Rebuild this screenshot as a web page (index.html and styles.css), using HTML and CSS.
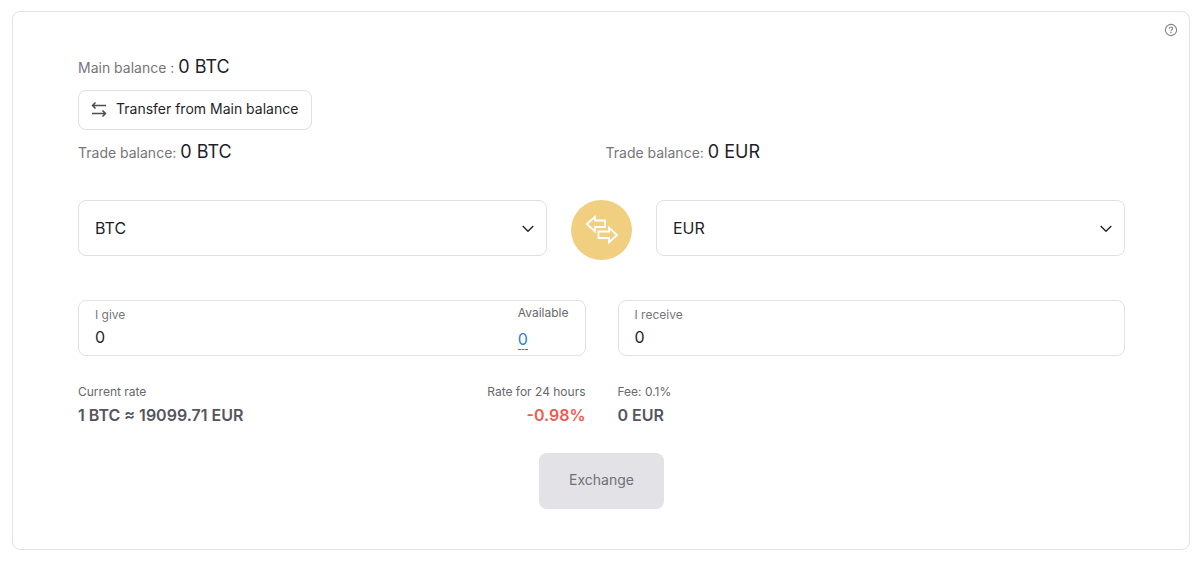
FILE: index.html
```
<!DOCTYPE html>
<html lang="en">
<head>
    <meta charset="UTF-8">
    <meta name="viewport" content="width=device-width, initial-scale=1.0">
    <title>Exchange</title>
    <link rel="stylesheet" href="styles.css">
</head>
<body>
    <main class="card">
        <button class="help" type="button" aria-label="Help">
            <svg width="14" height="14" viewBox="0 0 14 14" fill="none" stroke="currentColor">
                <circle cx="7" cy="7" r="5.6" stroke-width="1.1"/>
                <path d="M5.3 5.7C5.3 4.6 6 4 7 4s1.7.6 1.7 1.5C8.7 6.6 7 6.7 7 8.2M7 9.1v1.2" stroke-width="1.2"/>
            </svg>
        </button>

        <form class="exchange">
            <p class="balance">Main balance : <span class="amount">0 BTC</span></p>
            <button class="transfer" type="button">
                <svg width="16" height="16" viewBox="0 0 16 16" fill="none" stroke="currentColor" stroke-width="1.5">
                    <path d="M15 4.5H1.500M4.500 1.500l-3 3 3 3M1 12.500h13.500M11.500 9.500l3 3-3 3"/>
                </svg>
                Transfer from Main balance
            </button>
            <div class="trade-balances">
                <p class="balance">Trade balance: <span class="amount">0 BTC</span></p>
                <p class="balance">Trade balance: <span class="amount">0 EUR</span></p>
            </div>

            <div class="pair">
                <div class="select-box">
                    <select aria-label="Currency to give">
                        <option>BTC</option>
                        <option>EUR</option>
                    </select>
                    <svg class="chevron" width="12" height="8" viewBox="0 0 12 8" fill="none" stroke="currentColor" stroke-width="1.3">
                        <path d="M0.7 1L6 6.3 11.3 1"/>
                    </svg>
                </div>
                <button class="swap" type="button" aria-label="Swap currencies">
                    <svg width="34" height="30" viewBox="0 0 34 30" fill="none" stroke="currentColor" stroke-width="1.8">
                        <path d="M1.8 9L10 1.8v3.700h10V12H10v4.500z"/>
                        <path d="M32 20l-8-7.200v3.700H13.500V23H24v4.500z"/>
                    </svg>
                </button>
                <div class="select-box">
                    <select aria-label="Currency to receive">
                        <option>EUR</option>
                        <option>BTC</option>
                    </select>
                    <svg class="chevron" width="12" height="8" viewBox="0 0 12 8" fill="none" stroke="currentColor" stroke-width="1.3">
                        <path d="M0.7 1L6 6.3 11.3 1"/>
                    </svg>
                </div>
            </div>

            <div class="amounts">
                <div class="field">
                    <div class="field-main">
                        <label for="give">I give</label>
                        <input id="give" type="text" inputmode="decimal" value="0">
                    </div>
                    <div class="available">
                        <span>Available</span>
                        <a href="#give">0</a>
                    </div>
                </div>
                <div class="field">
                    <div class="field-main">
                        <label for="receive">I receive</label>
                        <input id="receive" type="text" inputmode="decimal" value="0">
                    </div>
                </div>
            </div>

            <div class="details">
                <div class="rates">
                    <div class="detail">
                        <span>Current rate</span>
                        <strong>1 BTC ≈ 19099.71 EUR</strong>
                    </div>
                    <div class="detail right">
                        <span>Rate for 24 hours</span>
                        <strong class="down">-0.98%</strong>
                    </div>
                </div>
                <div class="detail">
                    <span>Fee: 0.1%</span>
                    <strong>0 EUR</strong>
                </div>
            </div>

            <button class="submit" type="submit" disabled>Exchange</button>
        </form>
    </main>
</body>
</html>
```

FILE: styles.css
```
* {
    box-sizing: border-box;
}

body {
    margin: 0;
    padding: 11px 10px 12px 12px;
    background-color: #fff;
    color: #1f1f29;
    font-family: Inter, "Liberation Sans", sans-serif;
    font-size: 16px;
}

button, input, select {
    font-family: inherit;
    color: inherit;
}

button {
    padding: 0;
    cursor: pointer;
}

.card {
    position: relative;
    padding: 40px 64px 40px 65px;
    border: 1px solid #e3e3e6;
    border-radius: 8px;
}

.help {
    position: absolute;
    top: 11px;
    right: 11px;
    display: flex;
    border: none;
    background: none;
    color: #85858d;
}

.exchange {
    display: flex;
    flex-direction: column;
}

.balance {
    margin: 0;
    font-size: 14px;
    line-height: 30px;
    color: #76767a;
}

.amount {
    font-size: 18px;
    color: #1f1f29;
}

.transfer {
    display: flex;
    align-items: center;
    align-self: flex-start;
    gap: 9px;
    height: 40px;
    margin: 7px 0;
    padding: 0 13px 3px 12px;
    border: 1px solid #e0e0e4;
    border-radius: 8px;
    background-color: #fff;
    font-size: 14px;
}

.transfer svg {
    color: #4d4d57;
}

.trade-balances {
    display: grid;
    grid-template-columns: 1fr 1fr;
    gap: 8px;
}

.pair {
    display: grid;
    grid-template-columns: 1fr 61px 1fr;
    gap: 24px;
    margin-top: 32px;
}

.select-box {
    position: relative;
    height: 56px;
}

.select-box select {
    width: 100%;
    height: 100%;
    padding: 0 16px;
    border: 1px solid #e0e0e4;
    border-radius: 8px;
    background-color: #fff;
    font-size: 16px;
    appearance: none;
}

.chevron {
    position: absolute;
    top: 25px;
    right: 13px;
    pointer-events: none;
}

.swap {
    display: flex;
    align-items: center;
    justify-content: center;
    height: 60px;
    border: none;
    border-radius: 50%;
    background-color: #f1cf80;
    color: #fff;
}

.amounts, .details {
    display: grid;
    grid-template-columns: 1fr 1fr;
    gap: 32px;
}

.amounts {
    margin-top: 40px;
}

.field {
    display: flex;
    height: 56px;
    padding: 4px 16px;
    border: 1px solid #e0e2e6;
    border-radius: 8px;
}

.field-main {
    flex: 1;
    display: flex;
    flex-direction: column;
    min-width: 0;
    padding-top: 1px;
}

.field label {
    font-size: 12px;
    line-height: 18px;
    color: #76767a;
}

.field input {
    width: 100%;
    height: 26px;
    padding: 0;
    border: none;
    outline: none;
    background: none;
    font-size: 16px;
}

.available {
    display: flex;
    flex-direction: column;
    align-items: flex-start;
    font-size: 12px;
    line-height: 16px;
    color: #68686e;
}

.available a {
    margin-top: 8px;
    border-bottom: 1px dashed #2f80d0;
    color: #2f80d0;
    font-size: 16px;
    line-height: 20px;
    text-decoration: none;
}

.details {
    margin-top: 26px;
}

.rates {
    display: flex;
    justify-content: space-between;
}

.detail {
    display: flex;
    flex-direction: column;
    font-size: 12px;
    line-height: 20px;
    color: #68686e;
}

.detail strong {
    font-size: 16px;
    line-height: 26px;
    font-weight: 600;
    color: #55555e;
}

.detail .down {
    color: #f05a4f;
}

.right {
    text-align: right;
}

.submit {
    align-self: center;
    width: 125px;
    height: 56px;
    margin-top: 25px;
    padding-bottom: 3px;
    border: none;
    border-radius: 8px;
    background-color: #e3e2e7;
    color: #707076;
    font-size: 14px;
}
```
